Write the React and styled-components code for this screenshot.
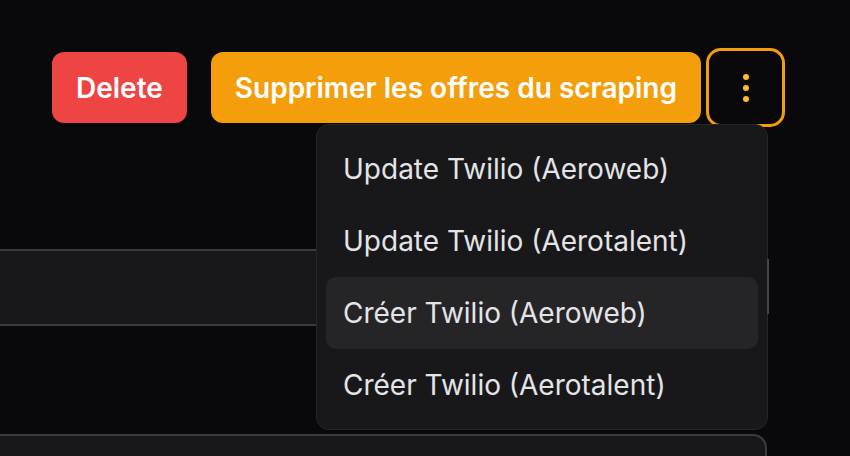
import React from "react"
import styled, { createGlobalStyle } from "styled-components"

const GlobalStyle = createGlobalStyle`
  html, body {
    margin: 0;
    padding: 0;
    background: #09090b;
    font-family: Inter, "Noto Sans", sans-serif;
    overflow: hidden;
  }
`

const Page = styled.div`
  width: 850px;
  height: 456px;
  background: #09090b;
  overflow: hidden;
  display: flex;
  flex-direction: column;
`

const Toolbar = styled.div`
  display: flex;
  justify-content: flex-end;
  align-items: center;
  padding: 48px 65px 0 0;
`

const Button = styled.button`
  height: 71px;
  border: none;
  border-radius: 12px;
  padding: 0 24px;
  font-family: Inter, sans-serif;
  font-size: 28px;
  font-weight: 600;
  color: #ffffff;
  background: ${props => props.bg};
  margin-right: ${props => props.gap || 0}px;
  cursor: pointer;
`

const MenuWrap = styled.div`
  position: relative;
`

const KebabButton = styled.button`
  width: 79px;
  height: 79px;
  box-sizing: border-box;
  border: 3px solid #f59e0b;
  border-radius: 15px;
  background: #09090b;
  display: flex;
  align-items: center;
  justify-content: center;
  padding: 0;
`

const Menu = styled.div`
  position: absolute;
  top: 76px;
  right: 17px;
  width: 452px;
  box-sizing: border-box;
  padding: 8px 9px;
  background: #18181b;
  border: 1.5px solid #27272a;
  border-radius: 13px;
  z-index: 10;
`

const MenuItem = styled.div`
  height: 72px;
  display: flex;
  align-items: center;
  padding: 0 17px;
  border-radius: 10px;
  font-size: 28px;
  color: #e4e4e7;
  background: ${props => (props.active ? "#252528" : "transparent")};
`

const Thumb = styled.div`
  position: absolute;
  right: -2px;
  top: 134px;
  width: 2px;
  height: 55px;
  background: #45454c;
`

const Content = styled.div`
  display: flex;
  flex-direction: column;
  margin: 122px 0 0 -20px;
  width: 787px;
`

const Row = styled.div`
  height: 73px;
  background: #18181b;
  border-top: 2px solid #3a3a3f;
  border-bottom: 2px solid #3a3a3f;
`

const Card = styled.div`
  margin-top: 108px;
  height: 60px;
  background: #18181b;
  border: 2px solid #3a3a3f;
  border-radius: 14px;
`

const items = [
  "Update Twilio (Aeroweb)",
  "Update Twilio (Aerotalent)",
  "Créer Twilio (Aeroweb)",
  "Créer Twilio (Aerotalent)",
]

const Dots = () => (
  <svg width="8" height="32" viewBox="0 0 8 32">
    <circle cx="4" cy="5" r="3" fill="#fbbf24" />
    <circle cx="4" cy="16" r="3" fill="#fbbf24" />
    <circle cx="4" cy="27" r="3" fill="#fbbf24" />
  </svg>
)

export default function App() {
  return (
    <Page>
      <GlobalStyle />
      <Toolbar>
        <Button bg="#ef4444" gap={24}>Delete</Button>
        <Button bg="#f59e0b" gap={5}>Supprimer les offres du scraping</Button>
        <MenuWrap>
          <KebabButton>
            <Dots />
          </KebabButton>
          <Menu>
            {items.map((label, i) => (
              <MenuItem key={label} active={i === 2}>{label}</MenuItem>
            ))}
            <Thumb />
          </Menu>
        </MenuWrap>
      </Toolbar>
      <Content>
        <Row />
        <Card />
      </Content>
    </Page>
  )
}
